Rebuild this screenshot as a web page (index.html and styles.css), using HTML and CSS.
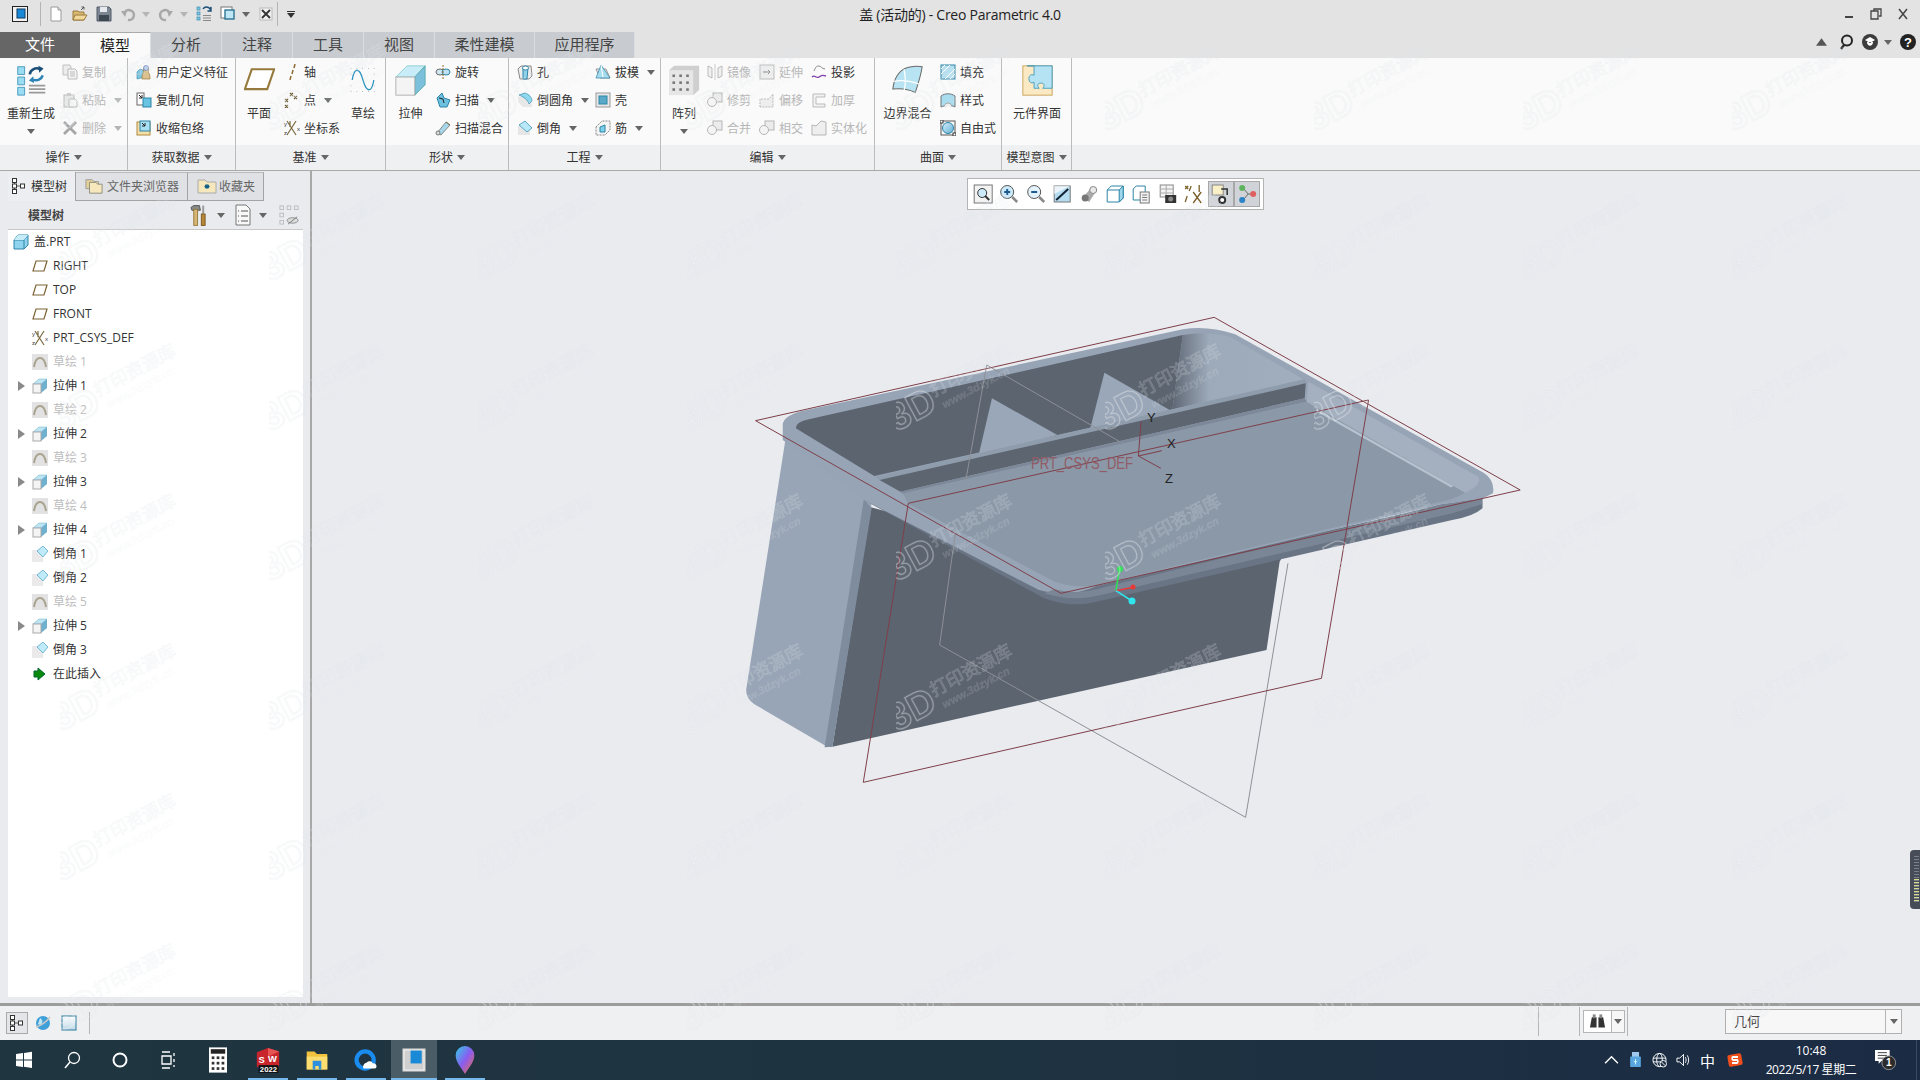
FILE: index.html
```html
<!DOCTYPE html>
<html lang="zh">
<head>
<meta charset="utf-8">
<title>盖 (活动的) - Creo Parametric 4.0</title>
<link rel="stylesheet" href="styles.css">
</head>
<body>
<svg class="defs" width="0" height="0">
<defs>
<linearGradient id="wallG" x1="0" x2="1" y1="0" y2="0"><stop offset="0" stop-color="#5f6774"/><stop offset=".28" stop-color="#9daaba"/><stop offset="1" stop-color="#a1aebe"/></linearGradient>
<linearGradient id="pinG" x1="0" x2="1" y1="0" y2="1"><stop offset="0" stop-color="#2fd0e8"/><stop offset=".5" stop-color="#8a5cf0"/><stop offset="1" stop-color="#f0703c"/></linearGradient>
<linearGradient id="blueG" x1="0" x2="1" y1="0" y2="1"><stop offset="0" stop-color="#d6f0fb"/><stop offset="1" stop-color="#62b0d4"/></linearGradient>
<linearGradient id="pageG" x1="0" x2="0" y1="0" y2="1"><stop offset="0" stop-color="#fff"/><stop offset="1" stop-color="#bfdbe8"/></linearGradient>
<symbol id="new" viewBox="0 0 16 16"><path d="M3 1h7l3 3v11H3z" fill="#fff" stroke="#9a9a9a"/><path d="M10 1v3h3" fill="#ddd" stroke="#9a9a9a"/></symbol>
<symbol id="open" viewBox="0 0 16 16"><path d="M1 14V5h5l1 1h5v8z" fill="#d9b873" stroke="#9a7a3a"/><path d="M1 14l2-5h12l-3 5z" fill="#f0d89c" stroke="#9a7a3a"/><path d="M9 4l3-3m0 0h-2.500m2.500 0v2.500" stroke="#555" fill="none"/></symbol>
<symbol id="save" viewBox="0 0 16 16"><path d="M1 1h12l2 2v12H1z" fill="#7c8692" stroke="#505a66"/><rect x="4" y="1" width="7" height="5" fill="#e6e9ee"/><rect x="3" y="9" width="10" height="6" fill="#3e4852"/></symbol>
<symbol id="undo" viewBox="0 0 16 16"><path d="M4 8a5 5 0 1 1 4 6" fill="none" stroke="#a8a8a8" stroke-width="2.500"/><path d="M1 5l6 0-2 6z" fill="#a8a8a8"/></symbol>
<symbol id="redo" viewBox="0 0 16 16"><path d="M12 8a5 5 0 1 0-4 6" fill="none" stroke="#a8a8a8" stroke-width="2.500"/><path d="M15 5H9l2 6z" fill="#a8a8a8"/></symbol>
<symbol id="regen" viewBox="0 0 16 16"><g fill="#7cc7e4" stroke="#3d8db0" stroke-width=".7"><rect x="1" y="1" width="3" height="3"/><rect x="1" y="6" width="3" height="3"/><rect x="1" y="11" width="3" height="3"/></g><path d="M7 12h8M7 14.500h8M7 9.500h8" stroke="#888"/><path d="M7 3a4 4 0 0 1 7 0l1-2v4h-3.500M14 7" fill="none" stroke="#1c4f78" stroke-width="1.400"/></symbol>
<symbol id="win" viewBox="0 0 16 16"><rect x="1" y="1" width="11" height="11" fill="#fff" stroke="#777"/><rect x="5" y="4" width="9" height="9" fill="#bfe6f5" stroke="#1f6b8a" stroke-width="1.300"/></symbol>
<symbol id="x" viewBox="0 0 16 16"><rect x="2" y="2" width="12" height="12" fill="#f2f2f2" stroke="#bbb"/><path d="M4 4l8 8M12 4l-8 8" stroke="#333" stroke-width="1.800"/></symbol>
<symbol id="regenB" viewBox="0 0 36 36"><g fill="#9adcf2" stroke="#3e93b8"><path d="M2 2h8v9H2z"/><path d="M2 14h8v9H2z"/><path d="M2 26h8v9H2z"/></g><path d="M15 24h19M15 28h19M15 32h19" stroke="#999" stroke-width="2"/><path d="M16 11a8 8 0 0 1 12-6" fill="none" stroke="#1c4f78" stroke-width="3"/><path d="M31 12a8 8 0 0 1-11 5" fill="none" stroke="#2d83b5" stroke-width="3"/><path d="M26 1l6 3-5 5z" fill="#1c4f78"/><path d="M21 21l-6-3 5-5z" fill="#2d83b5"/></symbol>
<symbol id="copy" viewBox="0 0 16 16"><path d="M1 1h7l1 2v8H1z" fill="#ececec" stroke="#c0c0c0"/><path d="M6 5h7l2 2v8H6z" fill="#f4f4f4" stroke="#bbb"/><path d="M8 8h5M8 10h5M8 12h5" stroke="#bbb"/></symbol>
<symbol id="paste" viewBox="0 0 16 16"><rect x="2" y="3" width="10" height="12" fill="#e8e8e8" stroke="#bbb"/><rect x="5" y="1" width="4" height="3" fill="#ccc"/><path d="M7 7h6l2 2v6H7z" fill="#f6f6f6" stroke="#bbb"/></symbol>
<symbol id="del" viewBox="0 0 16 16"><path d="M2 2l12 12M14 2L2 14" stroke="#a5a5a5" stroke-width="2.800"/></symbol>
<symbol id="udf" viewBox="0 0 16 16"><path d="M1 8l3-3 5 2v6l-8 2z" fill="#7fc6e2" stroke="#3f8fb0" stroke-width=".7"/><path d="M6 15c0-5 1-6 2-7-1-1-1-5 2-5s3 4 2 5c1 1 2 2 2 7z" fill="#dcc18e" stroke="#9a7a3a" stroke-width=".7"/><circle cx="10" cy="4" r="2.500" fill="#bcd0f0" stroke="#6a7fb0" stroke-width=".7"/></symbol>
<symbol id="cgeom" viewBox="0 0 16 16"><rect x="1" y="1" width="7" height="12" fill="#fff" stroke="#666"/><rect x="7" y="6" width="8" height="9" fill="#69c4e4" stroke="#2c84a6"/><path d="M3 3l3 3m0-3v3H3" fill="none" stroke="#222"/></symbol>
<symbol id="shrink" viewBox="0 0 16 16"><rect x="1" y="2" width="13" height="13" fill="#f4dfa8" stroke="#b08a3e"/><rect x="4" y="1" width="10" height="10" fill="#a9dff2" stroke="#2c84a6"/><path d="M6 3l3 3m0-3v3H6" fill="none" stroke="#222"/></symbol>
<symbol id="axis" viewBox="0 0 16 16"><path d="M11 0l-1 4M9 6L8 10M7 12l-1 4" stroke="#8c6c30" stroke-width="1.500"/></symbol>
<symbol id="point" viewBox="0 0 16 16"><path d="M1 7l3 3m0-3l-3 3M1 13l3 3m0-3l-3 3M6 1l3 3m0-3L6 4M10 4l3 3m0-3l-3 3" stroke="#6b5a30" stroke-width="1.100"/></symbol>
<symbol id="csys" viewBox="0 0 16 16"><path d="M6 1v6M12 1L3 15M3 1l9 14" stroke="#7a6a40" stroke-width="1.200" fill="none"/><text x="0" y="6" font-size="6" fill="#333" font-family="Liberation Sans">y</text><text x="0" y="15" font-size="6" fill="#333" font-family="Liberation Sans">z</text><text x="13" y="11" font-size="6" fill="#333" font-family="Liberation Sans">x</text></symbol>
<symbol id="revolve" viewBox="0 0 16 16"><ellipse cx="5" cy="8" rx="4" ry="3" fill="#d0e8f2" stroke="#6a6a6a"/><ellipse cx="11" cy="8" rx="4" ry="3" fill="#bfe0ee" stroke="#2c84a6"/><path d="M8 1v14" stroke="#8c6c30" stroke-dasharray="2 1"/></symbol>
<symbol id="sweep" viewBox="0 0 16 16"><path d="M2 6l5-5 2 5 6 2-3 7H5z" fill="#6cc1e0" stroke="#2c84a6"/><path d="M4 6l4 1 1 4" stroke="#222" fill="none"/></symbol>
<symbol id="sblend" viewBox="0 0 16 16"><path d="M2 13L11 2l4 3-9 10z" fill="#a5d6ea" stroke="#888"/><circle cx="3" cy="13" r="2" fill="#ddd" stroke="#777"/><path d="M11 2c1 1 3 2 4 3" stroke="#7a6a40"/></symbol>
<symbol id="hole" viewBox="0 0 16 16"><path d="M1 5l3-3h10l1 10-3 3H3z" fill="#eee" stroke="#888"/><path d="M6 4h5l-1 11H6z" fill="#8fd2ea" stroke="#2c84a6"/><ellipse cx="8.500" cy="4" rx="3" ry="2" fill="#fff" stroke="#2c84a6"/></symbol>
<symbol id="round" viewBox="0 0 16 16"><path d="M1 5h7l7 7v3H6L1 10z" fill="#e8e8e8"/><path d="M2 3l6-2c4 1 7 5 7 8l-3 3C11 8 7 5 2 3z" fill="#8fd8f0" stroke="#2c84a6" stroke-width=".7"/></symbol>
<symbol id="chamfer" viewBox="0 0 16 16"><path d="M1 6h7l5 5v4H1z" fill="#e6e6e6"/><path d="M2 5l6-4 7 7-5 4z" fill="#b8e8f8" stroke="#3f96b8" stroke-width=".8"/></symbol>
<symbol id="draft" viewBox="0 0 16 16"><path d="M1 5l4 9h10l-4-9z" fill="#e8e8e8" stroke="#999"/><path d="M1 14l5-13 9 13z" fill="#a8dcef" stroke="#2c84a6" stroke-width=".7"/><path d="M6 1l2 12" stroke="#fff"/></symbol>
<symbol id="shell" viewBox="0 0 16 16"><rect x="1" y="1" width="14" height="14" fill="#e8e8e8" stroke="#999"/><rect x="4" y="4" width="8" height="8" fill="#5aa9c9" stroke="#2c84a6"/></symbol>
<symbol id="rib" viewBox="0 0 16 16"><path d="M1 7l6-6h8v9l-5 5H1z" fill="#f4f4f4" stroke="#888" stroke-dasharray="2 1"/><path d="M5 7l5-2v7H5z" fill="#7fd0ea" stroke="#2c84a6"/></symbol>
<symbol id="mirror" viewBox="0 0 16 16"><path d="M1 2l4 2v10l-4-2zM15 2l-4 2v10l4-2z" fill="#f0f0f0" stroke="#bbb"/><path d="M8 0v16" stroke="#ccc"/></symbol>
<symbol id="extend" viewBox="0 0 16 16"><rect x="1" y="1" width="14" height="14" fill="#eee" stroke="#bbb"/><path d="M4 8h7m-2-2l2 2-2 2" stroke="#888" fill="none"/></symbol>
<symbol id="project" viewBox="0 0 16 16"><path d="M3 7c2-5 3-5 5-5s3 3 6 3" stroke="#888" fill="none"/><path d="M1 13c3-3 4 2 7 0s4-2 7-1" stroke="#8040b0" fill="none" stroke-width="1.400"/></symbol>
<symbol id="trim" viewBox="0 0 16 16"><rect x="6" y="1" width="9" height="9" fill="#ececec" stroke="#b5b5b5"/><circle cx="5" cy="10" r="4.500" fill="#f4f4f4" stroke="#b5b5b5"/></symbol>
<symbol id="offset" viewBox="0 0 16 16"><path d="M1 15V7h9l4-5v13z" fill="#eee" stroke="#bbb" stroke-dasharray="2 1"/></symbol>
<symbol id="thick" viewBox="0 0 16 16"><path d="M2 2h12v3H5v7h9v3H2z" fill="#f2f2f2" stroke="#bbb"/></symbol>
<symbol id="solid" viewBox="0 0 16 16"><path d="M1 5l4 1 5-5 5 1v13H1z" fill="#eee" stroke="#b5b5b5"/></symbol>
<symbol id="fill" viewBox="0 0 16 16"><rect x="1" y="1" width="14" height="14" fill="#b8e0f0" stroke="#2c84a6"/><path d="M1 10l9-9M5 15L15 5M1 5l4-4M10 15l5-5" stroke="#fff"/></symbol>
<symbol id="style" viewBox="0 0 16 16"><path d="M1 4c4-3 10-3 14 0v11c-3-2-10-2-14 0z" fill="#a8dcef" stroke="#777"/><path d="M4 14c2-4 6-4 8 0" fill="#f0f0f0" stroke="#999"/></symbol>
<symbol id="free" viewBox="0 0 16 16"><rect x="1" y="1" width="14" height="14" fill="none" stroke="#555"/><circle cx="8" cy="8" r="5.500" fill="url(#blueG)" stroke="#2c84a6"/><rect x="0" y="0" width="3" height="3" fill="#fff" stroke="#333"/><rect x="13" y="13" width="3" height="3" fill="#fff" stroke="#333"/></symbol>
<symbol id="planeB" viewBox="0 0 36 36"><path d="M9 5h26l-8 23H1z" fill="#fff" stroke="#96793c" stroke-width="2.400"/></symbol>
<symbol id="sketchB" viewBox="0 0 36 36"><path d="M3 18c3-18 10-18 15 0s12 18 15 0" fill="none" stroke="#2a93bf" stroke-width="1.800"/><path d="M1 2h1m7 0h1m7 0h1m7 0h1m7 0h1M1 10h1m31 0h1M1 26h1m31 0h1M1 34h1m7 0h1m7 0h1m7 0h1m7 0h1" stroke="#888" fill="none"/></symbol>
<symbol id="extB" viewBox="0 0 36 36"><path d="M1 14L14 1h21L23 14z" fill="#c8ecf8" stroke="#8cc"/><path d="M23 14L35 1v22L23 35z" fill="#7cc0dc" stroke="#5aa"/><rect x="1" y="14" width="22" height="21" fill="#f4f4f4" stroke="#aaa"/></symbol>
<symbol id="patB" viewBox="0 0 36 36"><path d="M0 6h28v29H0z" fill="#e6e6e6"/><path d="M0 6L6 1h29v28l-7 6V6z" fill="#cfcfcf"/><g fill="#777"><rect x="4" y="11" width="3" height="3"/><rect x="12" y="11" width="3" height="3"/><rect x="20" y="11" width="3" height="3"/><rect x="4" y="19" width="3" height="3"/><rect x="12" y="19" width="3" height="3"/><rect x="20" y="19" width="3" height="3"/><rect x="4" y="27" width="3" height="3"/><rect x="12" y="27" width="3" height="3"/><rect x="20" y="27" width="3" height="3"/></g></symbol>
<symbol id="boundB" viewBox="0 0 36 36"><path d="M1 28C2 16 8 6 18 3c6-2 14-2 17-1-1 8-4 18-8 30-8-4-18-5-26-4z" fill="#b8e3f2" stroke="#6a6a6a" stroke-width="1.200"/><path d="M14 5c2 10 2 18 0 25M2 19c10-2 20 0 29 3" stroke="#fff" stroke-width="1.500" fill="none"/></symbol>
<symbol id="compB" viewBox="0 0 36 36"><rect x="1" y="1" width="34" height="34" fill="#fbe9c4" stroke="#c29a4e"/><path d="M6 1h29v26H24c3-3 2-6-2-6s-5 3-2 6h-6v-7c-3 2-6 0-6-4s3-6 6-4V1z" fill="#b6e3f4" stroke="#3a97bd"/></symbol>
<symbol id="cube" viewBox="0 0 16 16"><path d="M1 6l4-5h10v10l-4 4H1z" fill="#8fd4ee" stroke="#2c84a6"/><path d="M1 6h10v9M11 6l4-5" stroke="#2c84a6" fill="none"/><path d="M1 6l4-5h10l-4 5z" fill="#c7ecf8"/></symbol>
<symbol id="plane" viewBox="0 0 16 16"><path d="M4 3h11l-3 10H1z" fill="#fff" stroke="#7d6234" stroke-width="1.200"/></symbol>
<symbol id="sk" viewBox="0 0 16 16"><rect width="16" height="16" fill="#e2e2e2"/><path d="M2 13C3 6 6 4 8 4s5 2 6 9" fill="none" stroke="#a8a490" stroke-width="2"/></symbol>
<symbol id="ext" viewBox="0 0 16 16"><path d="M1 6l6-5h8L9 6z" fill="#bde4f2" stroke="#7fbcd4" stroke-width=".6"/><path d="M9 6l6-5v9l-6 5z" fill="#6fb0cf"/><rect x="1" y="6" width="8" height="9" fill="#f4f4f4" stroke="#aaa"/></symbol>
<symbol id="cham" viewBox="0 0 16 16"><path d="M0 4h6l5 6v6H0z" fill="#eaeaea"/><path d="M5 5l6-5 5 5-5 6z" fill="#bfeafa" stroke="#4aa0c2" stroke-width=".7"/></symbol>
<symbol id="ins" viewBox="0 0 16 16"><path d="M6 2l7 6-7 6v-3H2V5h4z" fill="#0a8a0a" stroke="#063"/></symbol>
<symbol id="treeI" viewBox="0 0 16 16"><path d="M3.500 4v8M3.500 8H9" stroke="#555"/><g fill="#fff" stroke="#333"><rect x="1.500" y=".5" width="4" height="4"/><rect x="1.500" y="6" width="4" height="4"/><rect x="1.500" y="11.500" width="4" height="4"/><rect x="9.500" y="6" width="4" height="4"/></g></symbol>
<symbol id="folder" viewBox="0 0 20 20"><path d="M1 3h7l2 2h5v8H1z" fill="#e3cf98" stroke="#9a9a9a"/><path d="M5 6h7l2 2h5v10H5z" fill="#f6e7bd" stroke="#8a8a7a"/></symbol>
<symbol id="fav" viewBox="0 0 20 16"><path d="M1 2h7l2 2h9v11H1z" fill="#f6e7bd" stroke="#aaa"/><path d="M10 6v5M7.500 8.500h5M8 7l4 3M12 7l-4 3" stroke="#125f86" stroke-width="1.100"/></symbol>
<symbol id="hammer" viewBox="0 0 18 22"><path d="M1 3l3-2h6l1 5H2z" fill="#888" stroke="#555"/><rect x="4" y="5" width="4" height="17" fill="#d8b676" stroke="#96793c"/><rect x="13" y="1" width="2" height="9" fill="#999"/><rect x="12" y="10" width="4" height="12" fill="#b98538" stroke="#7a5a20"/></symbol>
<symbol id="listI" viewBox="0 0 16 22"><path d="M1 1h10l4 4v16H1z" fill="#f8f8f8" stroke="#777"/><path d="M3 7h1m2 0h7M3 12h1m2 0h7M3 17h1m2 0h7" stroke="#555"/></symbol>
<symbol id="treeOff" viewBox="0 0 22 22"><g fill="none" stroke="#bbb"><rect x="1" y="1" width="4" height="4"/><rect x="1" y="9" width="4" height="4"/><rect x="1" y="17" width="4" height="4"/><rect x="9" y="1" width="4" height="4"/><rect x="17" y="1" width="4" height="4"/></g><ellipse cx="15" cy="17" rx="6" ry="3" fill="#ddd" stroke="#888"/><path d="M10 21l10-8" stroke="#777"/></symbol>
<symbol id="vRefit" viewBox="0 0 20 20"><rect x="1" y="1" width="18" height="18" fill="#f2f2f2" stroke="#777"/><circle cx="9" cy="9" r="4.500" fill="#cdeafa" stroke="#333"/><path d="M12 12l4 4" stroke="#333" stroke-width="2"/></symbol>
<symbol id="vIn" viewBox="0 0 20 20"><circle cx="8" cy="8" r="6.500" fill="#cdeafa" stroke="#555"/><path d="M5 8h6M8 5v6" stroke="#1c5a90" stroke-width="2"/><path d="M13 13l5 5" stroke="#888" stroke-width="2.500"/></symbol>
<symbol id="vOut" viewBox="0 0 20 20"><circle cx="8" cy="8" r="6.500" fill="#e4f3fb" stroke="#555"/><path d="M5 8h6" stroke="#1c5a90" stroke-width="2"/><path d="M13 13l5 5" stroke="#888" stroke-width="2.500"/></symbol>
<symbol id="vRep" viewBox="0 0 20 20"><rect x="2" y="2" width="16" height="16" fill="#b4def0" stroke="#777"/><path d="M4 16L16 5" stroke="#123" stroke-width="2"/><path d="M2 2h16l-16 8z" fill="#fff" opacity=".7"/></symbol>
<symbol id="vDisp" viewBox="0 0 20 20"><path d="M3 14l9-10 5 3-7 11z" fill="#aaa"/><circle cx="14" cy="6" r="3.500" fill="#e8e8e8" stroke="#888"/><circle cx="6" cy="14" r="3.500" fill="#777"/></symbol>
<symbol id="vBox" viewBox="0 0 20 20"><path d="M2 6l4-4h12v12l-4 4H2z" fill="#ffffff" stroke="#2c84a6"/><path d="M14 6v12l4-4V2z" fill="#9ed7ec" stroke="#2c84a6"/><path d="M2 6h12" stroke="#2c84a6"/></symbol>
<symbol id="vSaved" viewBox="0 0 20 20"><path d="M2 5l3-3h9v14H2z" fill="#fff" stroke="#2c84a6"/><rect x="9" y="8" width="9" height="11" fill="#f4f4f4" stroke="#777"/><path d="M11 11h5M11 13.500h5M11 16h5" stroke="#777"/></symbol>
<symbol id="vCam" viewBox="0 0 20 20"><rect x="2" y="1" width="13" height="12" fill="#f4f4f4" stroke="#888"/><path d="M2 5h13M2 9h13M8 1v12" stroke="#aaa"/><rect x="7" y="11" width="11" height="8" fill="#333"/><circle cx="12.500" cy="15" r="2.500" fill="#888"/></symbol>
<symbol id="vDatum" viewBox="0 0 20 20"><path d="M1 2l3 3m0-3L1 5M7 2L5 7M3 12l-2 6M15 1v7M17 8L9 19M9 8l8 11" stroke="#7a5f28" stroke-width="1.300" fill="none"/></symbol>
<symbol id="vAnn" viewBox="0 0 20 20"><rect x="1" y="1" width="11" height="10" fill="#faf0c8" stroke="#888"/><circle cx="11" cy="16" r="3" fill="#fff" stroke="#333" stroke-width="2"/><path d="M10 5h6v6" fill="none" stroke="#333" stroke-width="1.500"/></symbol>
<symbol id="vNode" viewBox="0 0 20 20"><path d="M5 3l6 7-6 7M11 10h5" stroke="#666" fill="none"/><circle cx="5" cy="4" r="3" fill="#5fb35f"/><circle cx="16" cy="10" r="3" fill="#e06060"/><circle cx="5" cy="16" r="3" fill="#2c84c6"/></symbol>
<symbol id="globe" viewBox="0 0 16 16"><ellipse cx="8" cy="8" rx="7" ry="7" fill="#3f9fd8"/><path d="M1 12C6 11 12 6 15 2" stroke="#c8c8c8" stroke-width="1.600" fill="none"/><path d="M5 3c2 1 3 3 2 5s-3 2-4 1" fill="#bfe6f5"/></symbol>
<symbol id="page" viewBox="0 0 16 16"><rect x="1" y="1" width="14" height="14" fill="url(#pageG)" stroke="#2c7b9e"/></symbol>
<pattern id="wmP" x="60" y="40" width="209" height="150" patternUnits="userSpaceOnUse">
<g transform="translate(0 92) rotate(-28)" font-family="Liberation Sans, Noto Sans CJK SC, sans-serif">
<g font-weight="700" font-size="38" fill="none" stroke-linejoin="round"><text stroke="#bcc2ca" stroke-opacity=".13" stroke-width="2.400">3D</text><text stroke="#fff" stroke-opacity=".32" stroke-width="1">3D</text></g>
<text x="50" y="-13" font-size="18" fill="#fff" fill-opacity=".08" stroke="#fff" stroke-opacity=".16" stroke-width=".5" font-family="Noto Sans CJK SC, sans-serif">打印资源库</text>
<text x="50" y="-13" font-size="18" fill="none" stroke="#b8bec6" stroke-opacity=".1" stroke-width="1" font-family="Noto Sans CJK SC, sans-serif">打印资源库</text>
<text x="54" y="2" font-size="11" font-style="italic" font-weight="700" fill="#fff" fill-opacity=".12" stroke="#b8bec6" stroke-opacity=".1" stroke-width=".4">www.3dzyk.cn</text>
</g>
</pattern>
</defs>
</svg>

<header class="titlebar">
  <div class="qat">
    <svg class="appicon" viewBox="0 0 16 16"><rect x=".5" y=".5" width="15" height="15" fill="#f2f2f2" stroke="#222"/><rect x="5" y="3" width="8" height="9" fill="#1b8ad6" stroke="#0b3b66"/></svg>
    <i class="vsep"></i>
    <svg class="i q1"><use href="#new"/></svg>
    <svg class="i q2"><use href="#open"/></svg>
    <svg class="i q2"><use href="#save"/></svg>
    <svg class="i q2"><use href="#undo"/></svg><i class="dd lite"></i>
    <svg class="i q3"><use href="#redo"/></svg><i class="dd lite"></i>
    <svg class="i q3"><use href="#regen"/></svg>
    <svg class="i q3"><use href="#win"/></svg><i class="dd"></i>
    <svg class="i q4"><use href="#x"/></svg>
    <i class="vsep v2"></i>
    <i class="ddline"></i>
  </div>
  <div class="title">盖 (活动的) - Creo Parametric 4.0</div>
  <div class="winctl">
    <svg class="wc" viewBox="0 0 12 12"><path d="M2 9h8" stroke="#444" stroke-width="2"/></svg>
    <svg class="wc" viewBox="0 0 12 12"><path d="M4 3V1h7v7H9M1 3h7v8H1z" fill="none" stroke="#444" stroke-width="1.300"/></svg>
    <svg class="wc" viewBox="0 0 12 12"><path d="M2 1l8 10M10 1L2 11" stroke="#444" stroke-width="1.500"/></svg>
  </div>
</header>

<nav class="tabbar">
  <div class="tabs">
    <div class="tab file">文件</div>
    <div class="tab on">模型</div>
    <div class="tab">分析</div>
    <div class="tab">注释</div>
    <div class="tab">工具</div>
    <div class="tab">视图</div>
    <div class="tab wide">柔性建模</div>
    <div class="tab wide">应用程序</div>
  </div>
  <div class="helpers">
    <svg class="hi-s" viewBox="0 0 12 8"><path d="M6 0l6 8H0z" fill="#555"/></svg>
    <svg class="hi" viewBox="0 0 16 16"><circle cx="9" cy="6.500" r="5" fill="none" stroke="#222" stroke-width="2"/><path d="M6 11l-3 4" stroke="#222" stroke-width="2.400"/></svg>
    <svg class="hi" viewBox="0 0 16 16"><circle cx="8" cy="8" r="8" fill="#3c3c3c"/><path d="M3 6l5-3 5 3-5 3zM5 8c0 5 6 5 6 0" fill="#fff"/></svg>
    <i class="dd"></i>
    <svg class="hi" viewBox="0 0 16 16"><circle cx="8" cy="8" r="8" fill="#222"/><text x="8" y="13" font-size="13" font-weight="700" text-anchor="middle" fill="#fff" font-family="Liberation Sans">?</text></svg>
  </div>
</nav>

<section class="ribbon">
  <div class="grp g1">
    <div class="body">
      <div class="big b62"><div class="bi"><svg class="ib"><use href="#regenB"/></svg></div><span>重新生成</span><i class="dd"></i></div>
      <div class="col">
        <div class="it dis"><svg class="i"><use href="#copy"/></svg>复制</div>
        <div class="it dis"><svg class="i"><use href="#paste"/></svg>粘贴<i class="dd lite"></i></div>
        <div class="it dis"><svg class="i"><use href="#del"/></svg>删除<i class="dd lite"></i></div>
      </div>
    </div>
    <div class="lab">操作<i class="dd"></i></div>
  </div>
  <div class="grp g2">
    <div class="body pad8">
      <div class="col">
        <div class="it"><svg class="i"><use href="#udf"/></svg>用户定义特征</div>
        <div class="it"><svg class="i"><use href="#cgeom"/></svg>复制几何</div>
        <div class="it"><svg class="i"><use href="#shrink"/></svg>收缩包络</div>
      </div>
    </div>
    <div class="lab">获取数据<i class="dd"></i></div>
  </div>
  <div class="grp g3">
    <div class="body">
      <div class="big b46"><div class="bi"><svg class="ib"><use href="#planeB"/></svg></div><span>平面</span></div>
      <div class="col w58">
        <div class="it"><svg class="i"><use href="#axis"/></svg>轴</div>
        <div class="it"><svg class="i"><use href="#point"/></svg>点<i class="dd"></i></div>
        <div class="it"><svg class="i"><use href="#csys"/></svg>坐标系</div>
      </div>
      <div class="big b46"><div class="bi"><svg class="ib sm"><use href="#sketchB"/></svg></div><span>草绘</span></div>
    </div>
    <div class="lab">基准<i class="dd"></i></div>
  </div>
  <div class="grp g4">
    <div class="body">
      <div class="big b49"><div class="bi"><svg class="ib"><use href="#extB"/></svg></div><span>拉伸</span></div>
      <div class="col">
        <div class="it"><svg class="i"><use href="#revolve"/></svg>旋转</div>
        <div class="it"><svg class="i"><use href="#sweep"/></svg>扫描<i class="dd"></i></div>
        <div class="it"><svg class="i"><use href="#sblend"/></svg>扫描混合</div>
      </div>
    </div>
    <div class="lab">形状<i class="dd"></i></div>
  </div>
  <div class="grp g5">
    <div class="body pad8">
      <div class="col w78">
        <div class="it"><svg class="i"><use href="#hole"/></svg>孔</div>
        <div class="it"><svg class="i"><use href="#round"/></svg>倒圆角<i class="dd"></i></div>
        <div class="it"><svg class="i"><use href="#chamfer"/></svg>倒角<i class="dd"></i></div>
      </div>
      <div class="col">
        <div class="it"><svg class="i"><use href="#draft"/></svg>拔模<i class="dd"></i></div>
        <div class="it"><svg class="i"><use href="#shell"/></svg>壳</div>
        <div class="it"><svg class="i"><use href="#rib"/></svg>筋<i class="dd"></i></div>
      </div>
    </div>
    <div class="lab">工程<i class="dd"></i></div>
  </div>
  <div class="grp g6">
    <div class="body">
      <div class="big b46"><div class="bi"><svg class="ib"><use href="#patB"/></svg></div><span>阵列</span><i class="dd"></i></div>
      <div class="col w52">
        <div class="it dis"><svg class="i"><use href="#mirror"/></svg>镜像</div>
        <div class="it dis"><svg class="i"><use href="#trim"/></svg>修剪</div>
        <div class="it dis"><svg class="i"><use href="#trim"/></svg>合并</div>
      </div>
      <div class="col w52">
        <div class="it dis"><svg class="i"><use href="#extend"/></svg>延伸</div>
        <div class="it dis"><svg class="i"><use href="#offset"/></svg>偏移</div>
        <div class="it dis"><svg class="i"><use href="#trim"/></svg>相交</div>
      </div>
      <div class="col">
        <div class="it"><svg class="i"><use href="#project"/></svg>投影</div>
        <div class="it dis"><svg class="i"><use href="#thick"/></svg>加厚</div>
        <div class="it dis"><svg class="i"><use href="#solid"/></svg>实体化</div>
      </div>
    </div>
    <div class="lab">编辑<i class="dd"></i></div>
  </div>
  <div class="grp g7">
    <div class="body">
      <div class="big b65"><div class="bi"><svg class="ib"><use href="#boundB"/></svg></div><span>边界混合</span></div>
      <div class="col">
        <div class="it"><svg class="i"><use href="#fill"/></svg>填充</div>
        <div class="it"><svg class="i"><use href="#style"/></svg>样式</div>
        <div class="it"><svg class="i"><use href="#free"/></svg>自由式</div>
      </div>
    </div>
    <div class="lab">曲面<i class="dd"></i></div>
  </div>
  <div class="grp g8">
    <div class="body">
      <div class="big b70"><div class="bi"><svg class="ib"><use href="#compB"/></svg></div><span>元件界面</span></div>
    </div>
    <div class="lab">模型意图<i class="dd"></i></div>
  </div>
  <div class="grp rest"><div class="body"></div><div class="lab"></div></div>
</section>

<main class="main">
  <aside class="side">
    <div class="stabs">
      <div class="stab act"><svg class="i"><use href="#treeI"/></svg>模型树</div>
      <div class="stab t2"><svg class="i f"><use href="#folder"/></svg>文件夹浏览器</div>
      <div class="stab t3"><svg class="i f"><use href="#fav"/></svg>收藏夹</div>
    </div>
    <div class="stool">
      <b>模型树</b>
      <div class="tools">
        <svg class="tl h"><use href="#hammer"/></svg><i class="dd"></i>
        <svg class="tl n"><use href="#listI"/></svg><i class="dd"></i>
        <svg class="tl o"><use href="#treeOff"/></svg>
      </div>
    </div>
    <div class="tree">
      <div class="row root"><svg class="i"><use href="#cube"/></svg>盖.PRT</div>
      <div class="row"><svg class="i"><use href="#plane"/></svg>RIGHT</div>
      <div class="row"><svg class="i"><use href="#plane"/></svg>TOP</div>
      <div class="row"><svg class="i"><use href="#plane"/></svg>FRONT</div>
      <div class="row"><svg class="i"><use href="#csys"/></svg>PRT_CSYS_DEF</div>
      <div class="row off"><svg class="i"><use href="#sk"/></svg>草绘 1</div>
      <div class="row"><i class="tw"></i><svg class="i"><use href="#ext"/></svg>拉伸 1</div>
      <div class="row off"><svg class="i"><use href="#sk"/></svg>草绘 2</div>
      <div class="row"><i class="tw"></i><svg class="i"><use href="#ext"/></svg>拉伸 2</div>
      <div class="row off"><svg class="i"><use href="#sk"/></svg>草绘 3</div>
      <div class="row"><i class="tw"></i><svg class="i"><use href="#ext"/></svg>拉伸 3</div>
      <div class="row off"><svg class="i"><use href="#sk"/></svg>草绘 4</div>
      <div class="row"><i class="tw"></i><svg class="i"><use href="#ext"/></svg>拉伸 4</div>
      <div class="row"><svg class="i"><use href="#cham"/></svg>倒角 1</div>
      <div class="row"><svg class="i"><use href="#cham"/></svg>倒角 2</div>
      <div class="row off"><svg class="i"><use href="#sk"/></svg>草绘 5</div>
      <div class="row"><i class="tw"></i><svg class="i"><use href="#ext"/></svg>拉伸 5</div>
      <div class="row"><svg class="i"><use href="#cham"/></svg>倒角 3</div>
      <div class="row"><svg class="i"><use href="#ins"/></svg>在此插入</div>
    </div>
  </aside>
  <div class="canvas">
    <div class="vbar">
      <svg class="v"><use href="#vRefit"/></svg>
      <svg class="v"><use href="#vIn"/></svg>
      <svg class="v"><use href="#vOut"/></svg>
      <svg class="v"><use href="#vRep"/></svg>
      <svg class="v"><use href="#vDisp"/></svg>
      <svg class="v"><use href="#vBox"/></svg>
      <svg class="v"><use href="#vSaved"/></svg>
      <svg class="v"><use href="#vCam"/></svg>
      <svg class="v"><use href="#vDatum"/></svg>
      <svg class="v on"><use href="#vAnn"/></svg>
      <svg class="v on"><use href="#vNode"/></svg>
    </div>
    <svg class="model" viewBox="312 171 1608 832">
      <g transform="translate(720 300) scale(.523 .33333)">
        <path d="M285 620L215 1340 1045 1050 1070 785 1100 700 700 800z" fill="#5c6470"/>
        <path d="M125 420L50 1170Q50 1195 65 1212L205 1340 215 1340 290 610 275 590 130 400z" fill="#98a5b6"/>
        <path d="M200 1342L215 1340 290 625 275 598z" fill="#7f8c9d"/>
        <path d="M275 600L620 895Q670 925 720 905L1400 660Q1440 650 1458 625L1458 590 700 850 400 640z" fill="#697484"/>
        <path d="M120 375Q120 345 165 330L885 88Q930 75 985 103L1460 518Q1482 540 1478 580L1455 598 1380 612 720 858Q670 895 610 870L275 600 120 420z" fill="#97a4b5"/>
        <path d="M640 868Q680 885 720 868L1380 612 1455 598 1458 612 1400 640 720 888Q670 905 620 880z" fill="#7a8696"/>
        <path d="M145 385Q145 365 170 358L885 105 865 328 295 528z" fill="#5c6470"/>
        <path d="M885 105Q930 92 975 110L1115 238 865 328z" fill="url(#wallG)"/>
        <path d="M520 295L645 405 495 462z" fill="#9aa7b8"/>
        <path d="M735 218L860 330 708 385z" fill="#9aa7b8"/>
        <path d="M297 530L1118 238 1122 250 305 540z" fill="#8f9cac"/>
        <path d="M305 540L1120 250 1118 295 345 575z" fill="#5d6571"/>
        <path d="M345 575L1118 295 1122 305 350 582z" fill="#7d8999"/>
        <path d="M350 580L1122 305 1425 578Q1400 600 1370 608L720 855Q680 866 640 845L360 612z" fill="#8a98a8"/>
        <path d="M1125 245L1450 530Q1458 555 1425 578L1122 305z" fill="#a4b0c0"/>
        <path d="M1140 330L1400 560" stroke="#b7c2cf" stroke-width="6" fill="none"/>
        <g fill="none">
          <path class="pg" d="M510 195L470 540M510 195L770 430M450 700L420 1035 1005 1552 1086 790"/>
          <path class="pr" d="M68 362L945 52 1530 570 652 880z"/>
          <path class="pr" d="M360 610L1240 300 1150 1135 274 1447z"/>
          <path class="pr" d="M805 365L800 468 845 452M800 468L843 505"/>
          <path class="tg" d="M757 872L764 806"/>
          <path class="trd" d="M757 872L790 862"/>
          <path class="tc" d="M757 872L788 903"/>
        </g>
      </g>
      <circle cx="1120" cy="569" r="3" fill="#31e35a"/>
      <circle cx="1133" cy="587" r="2.500" fill="#e63a3a"/>
      <circle cx="1132" cy="601" r="3.500" fill="#2fe6ee"/>
      <text class="lbl c" x="1031" y="469" textLength="102" lengthAdjust="spacingAndGlyphs">PRT_CSYS_DEF</text>
      <text class="lbl" x="1147" y="422">Y</text>
      <text class="lbl" x="1167" y="448">X</text>
      <text class="lbl" x="1165" y="483">Z</text>
    </svg>
    <div class="grip"><i></i></div>
  </div>
</main>

<footer class="status">
  <div class="sleft">
    <span class="sbtn"><svg class="i"><use href="#treeI"/></svg></span>
    <svg class="i s"><use href="#globe"/></svg>
    <svg class="i s"><use href="#page"/></svg>
    <i class="ssep"></i>
  </div>
  <div class="sright">
    <i class="ssep"></i><i class="ssep gap"></i>
    <span class="find"><svg class="bino" viewBox="0 0 18 16"><path d="M1 15l2-11h5v11zM10 15V4h5l2 11z" fill="#333"/><rect x="4" y="1" width="3" height="4" fill="#888"/><rect x="11" y="1" width="3" height="4" fill="#888"/></svg><span class="fdd"><i class="dd"></i></span></span>
    <i class="ssep"></i>
    <span class="combo"><span class="ctext">几何</span><span class="fdd"><i class="dd"></i></span></span>
  </div>
</footer>

<footer class="taskbar">
  <div class="tk-left">
    <span class="tk"><svg class="t-i" viewBox="0 0 18 18"><path d="M1 3l7-1v6.500H1zM9 2l8-1.300V8.500H9zM1 9.500h7V16l-7-1zM9 9.500h8v7.500l-8-1.200z" fill="#fff"/></svg></span>
    <span class="tk"><svg class="t-i" viewBox="0 0 18 18"><circle cx="11" cy="7" r="5.500" fill="none" stroke="#fff" stroke-width="1.300"/><path d="M7 11l-5 6" stroke="#fff" stroke-width="1.500"/></svg></span>
    <span class="tk"><svg class="t-i" viewBox="0 0 18 18"><circle cx="9" cy="9" r="6.500" fill="none" stroke="#fff" stroke-width="2"/></svg></span>
    <span class="tk"><svg class="t-i" viewBox="0 0 18 18"><path d="M3 1h8M3 17h8M3 5h9v8H3zM15 2v3M15 8v3M15 14v2" fill="none" stroke="#fff" stroke-width="1.300"/></svg></span>
    <span class="tk calc"><svg class="t-b" viewBox="0 0 20 28"><rect width="20" height="28" fill="#fff"/><rect x="2" y="2" width="16" height="5" fill="#222"/><g fill="#333"><rect x="3" y="10" width="3" height="3"/><rect x="8.500" y="10" width="3" height="3"/><rect x="14" y="10" width="3" height="3"/><rect x="3" y="16" width="3" height="3"/><rect x="8.500" y="16" width="3" height="3"/><rect x="14" y="16" width="3" height="3"/><rect x="3" y="22" width="3" height="3"/><rect x="8.500" y="22" width="3" height="3"/><rect x="14" y="22" width="3" height="3"/></g></svg></span>
    <span class="tk app"><svg class="t-b" viewBox="0 0 28 30"><path d="M1 6l13-5 13 4v17l-13 6-13-5z" fill="#c8242c"/><path d="M14 1l13 4-13 6z" fill="#e65454"/><text x="3" y="18" font-size="11" font-weight="700" fill="#fff" font-family="Liberation Sans">S</text><text x="14" y="17" font-size="11" font-weight="700" fill="#fff" font-family="Liberation Sans">W</text><rect x="3" y="21" width="23" height="9" fill="#111"/><text x="14.500" y="29" text-anchor="middle" font-size="9" font-weight="700" fill="#fff" font-family="Liberation Sans">2022</text></svg></span>
    <span class="tk app"><svg class="t-b" viewBox="0 0 28 28"><path d="M2 4h9l3 3h12v18H2z" fill="#f2c23e"/><rect x="2" y="10" width="24" height="15" fill="#fbdd70"/><path d="M9 15h10v10h-3v-4h-4v4H9z" fill="#2e90dc"/></svg></span>
    <span class="tk app"><svg class="t-b" viewBox="0 0 28 28"><circle cx="13" cy="14" r="10" fill="none" stroke="#1a8cf0" stroke-width="5"/><path d="M11 24a5 5 0 0 1 4-7 4 4 0 0 1 7 1 3 3 0 0 1 2 6z" fill="#fff"/></svg></span>
    <span class="tk app cur"><svg class="t-b" viewBox="0 0 28 28"><rect x="1" y="1" width="26" height="26" fill="#f0f0f0" stroke="#bbb"/><rect x="3" y="3" width="22" height="22" fill="#cfcfcf"/><rect x="10" y="3" width="13" height="15" fill="#1b8ad6"/></svg></span>
    <span class="tk app"><svg class="t-b" viewBox="0 0 22 30"><path d="M11 30C6 22 1 17 1 10a10 10 0 0 1 20 0c0 7-5 12-10 20z" fill="url(#pinG)"/></svg></span>
  </div>
  <div class="tray">
    <svg class="tr" viewBox="0 0 14 14"><path d="M1 10l6-6 6 6" fill="none" stroke="#fff" stroke-width="1.300"/></svg>
    <svg class="tr" viewBox="0 0 14 18"><rect x="3" y="0" width="8" height="6" fill="#9ec9ec"/><rect x="1" y="5" width="12" height="12" rx="1" fill="#5aa7e0"/><path d="M7 8v6M5 10l2 2 2-2" stroke="#dff" fill="none"/></svg>
    <svg class="tr" viewBox="0 0 16 16"><circle cx="8" cy="8" r="7" fill="none" stroke="#fff"/><ellipse cx="8" cy="8" rx="3" ry="7" fill="none" stroke="#fff"/><path d="M1 6h14M1 10h14" stroke="#fff"/><circle cx="12" cy="12" r="3.500" fill="#1c2e42" stroke="#fff"/><path d="M10 10l4 4" stroke="#fff"/></svg>
    <svg class="tr" viewBox="0 0 16 16"><path d="M1 6h3l4-4v12l-4-4H1z" fill="none" stroke="#fff"/><path d="M10 5c1 2 1 4 0 6M12 3c2 3 2 7 0 10" fill="none" stroke="#fff"/></svg>
    <span class="ime">中</span>
    <svg class="tr sg" viewBox="0 0 16 16"><rect x="1" y="2" width="14" height="12" rx="2" transform="rotate(-10 8 8)" fill="#f04e1a"/><path d="M11 5H6c-1 0-1 3 0 3h4c1 0 1 3 0 3H5" fill="none" stroke="#fff" stroke-width="1.800"/></svg>
    <div class="clock"><span>10:48</span><span class="date">2022/5/17 星期二</span></div>
    <span class="notif"><svg class="nsvg" viewBox="0 0 26 24"><path d="M1 1h16v12H8l-3 3v-3H1z" fill="#fff"/><path d="M4 4h10M4 7h10M4 10h10" stroke="#333"/><circle cx="16" cy="15" r="7.500" fill="#2b2b2b" stroke="#9a9a9a"/><text x="16" y="19" text-anchor="middle" font-size="11" font-weight="700" fill="#fff" font-family="Liberation Sans">1</text></svg></span>
    <i class="showd"></i>
  </div>
</footer>

<svg class="wm" width="1920" height="1040"><rect width="1920" height="1040" fill="url(#wmP)"/></svg>
</body>
</html>
```
FILE: styles.css
```css
* { box-sizing: border-box; }
html, body { margin: 0; padding: 0; }
body {
  width: 1920px; height: 1080px; overflow: hidden; position: relative;
  display: flex; flex-direction: column;
  font-family: "Open Sans", "Noto Sans CJK SC", sans-serif;
  font-size: 12px; color: #333; background: #e9ebef;
}
i { font-style: normal; display: block; }
svg { display: block; flex: none; }
.defs { position: absolute; }
.dd { width: 0; height: 0; border: 4px solid transparent; border-top: 5px solid #666; border-bottom: 0; flex: none; }
.dd.lite { border-top-color: #b5b5b5; }

.titlebar { height: 32px; padding-bottom: 4px; background: #e3e3e3; display: grid; grid-template-columns: 1fr auto 1fr; align-items: center; }
.qat { display: flex; align-items: center; padding-left: 12px; }
.appicon { width: 16px; height: 16px; }
.vsep { width: 1px; height: 24px; background: #b4b4b4; margin-left: 12px; }
.v2 { margin-left: 3px; }
.i { width: 16px; height: 16px; }
.q1 { margin-left: 7px; }
.q2 { margin-left: 8px; }
.q3 { margin-left: 8px; }
.q4 { margin-left: 8px; }
.qat .dd { margin-left: 6px; }
.ddline { width: 8px; height: 7px; margin-left: 9px; border-top: 1px solid #333; position: relative; }
.ddline::after { content: ""; position: absolute; left: 0; top: 1px; border: 4px solid transparent; border-top: 5px solid #333; border-bottom: 0; }
.title { font-size: 14px; color: #222; letter-spacing: -.25px; }
.winctl { display: flex; justify-content: flex-end; gap: 15px; padding-right: 11px; }
.wc { width: 12px; height: 12px; }

.tabbar { height: 26px; background: #e3e3e3; display: flex; justify-content: space-between; }
.tabs { display: flex; }
.tab { width: 71px; height: 26px; background: #c8ccd0; border-right: 1px solid #dcdde0; font-size: 15px; line-height: 25px; text-align: center; color: #444; }
.tab.file { width: 80px; background: #666; color: #fff; border: 0; }
.tab.on { background: #fafafa; color: #222; border-top: 1px solid #aaa; }
.tab.wide { width: 100px; }
.helpers { display: flex; align-items: center; gap: 7px; padding: 0 4px 6px 0; }
.hi-s { width: 11px; height: 8px; margin-right: 4px; }
.hi { width: 16px; height: 16px; }
.hi:nth-child(2) { margin-right: 1px; }
.helpers .dd { margin: 0 1px 0 -1px; }

.ribbon { height: 113px; display: flex; border-bottom: 1px solid #a9a9a9; background: #eff0f2; }
.grp { display: flex; flex-direction: column; border-right: 1px solid #bcbcbc; flex: none; }
.g1 { width: 128px; } .g2 { width: 108px; } .g3 { width: 150px; } .g4 { width: 123px; }
.g5 { width: 152px; } .g6 { width: 214px; } .g7 { width: 127px; } .g8 { width: 70px; }
.rest { flex: 1; border: 0; }
.body { height: 87px; background: #fafafa; display: flex; flex: none; }
.pad8 { padding-left: 8px; }
.lab { flex: 1; display: flex; align-items: center; justify-content: center; gap: 4px; color: #333; white-space: nowrap; padding-bottom: 1px; }
.col { display: flex; flex-direction: column; }
.w52 { width: 52px; } .w58 { width: 58px; padding-left: 2px; } .w78 { width: 78px; }
.it { height: 28px; display: flex; align-items: center; gap: 4px; white-space: nowrap; color: #333; }
.it .dd { margin-left: 4px; }
.it.dis { color: #b7b7b7; }
.big { display: flex; flex-direction: column; align-items: center; flex: none; white-space: nowrap; color: #333; }
.b62 { width: 62px; } .b46 { width: 46px; } .b49 { width: 49px; } .b65 { width: 65px; } .b70 { width: 70px; }
.bi { height: 44px; display: flex; align-items: flex-start; padding-top: 7px; }
.big > span { line-height: 24px; height: 24px; }
.big .dd { margin-top: 3px; }
.ib { width: 31px; height: 31px; }
.ib.sm { width: 26px; height: 26px; margin-top: 2px; }

.main { height: 832px; display: flex; flex: none; }
.side { width: 312px; flex: none; border-right: 2px solid #a8a8a8; padding-left: 8px; background: #e9ebef; display: flex; flex-direction: column; }
.stabs { display: flex; height: 30px; margin-left: -8px; padding: 1px 0 0 8px; }
.stab { display: flex; align-items: center; gap: 4px; height: 29px; padding-bottom: 2px; border: 1px solid #a4a4a4; border-left: 0; border-top: 1px solid #bbb; background: #dfe1e4; color: #666; }
.stab.act { width: 68px; background: #eceef1; border: 0; border-right: 1px solid #a4a4a4; color: #333; gap: 4px; padding-left: 3px; }
.t2 { width: 112px; padding-left: 8px; gap: 3px; }
.t3 { width: 76px; padding-left: 9px; gap: 2px; }
.i.f { width: 20px; height: 18px; }
.stool { height: 29px; display: flex; align-items: center; justify-content: space-between; border-bottom: 1px solid #c8c8c8; padding: 0 4px 0 20px; width: 295px; }
.stool b { font-weight: 700; color: #444; }
.tools { display: flex; align-items: center; gap: 8px; }
.tl { width: 17px; height: 22px; }
.tl.h { margin-right: 2px; }
.tl.n { width: 16px; margin-left: 2px; }
.tl.o { width: 20px; height: 20px; margin-left: 4px; }
.tree { background: #fff; width: 295px; flex: 1; margin-bottom: 6px; }
.row { height: 24px; display: flex; align-items: center; gap: 5px; padding: 0 0 2px 24px; position: relative; color: #333; white-space: nowrap; }
.row .i { position: relative; top: 1px; }
.row.root { padding-left: 5px; gap: 5px; }
.row.off { color: #bdbdbd; }
.tw { position: absolute; left: 10px; top: 7px; width: 0; height: 0; border: 5px solid transparent; border-left: 7px solid #8a8a8a; border-right: 0; }

.canvas { flex: 1; position: relative; background: #e9ebef; }
.model { position: absolute; left: 0; top: 0; width: 1608px; height: 832px; }
.pr { stroke: #7e3f49; stroke-width: 1; vector-effect: non-scaling-stroke; }
.pg { stroke: #8d9096; stroke-width: 1; vector-effect: non-scaling-stroke; }
.tg { stroke: #31e35a; stroke-width: 1.500; vector-effect: non-scaling-stroke; }
.trd { stroke: #e63a3a; stroke-width: 1.500; vector-effect: non-scaling-stroke; }
.tc { stroke: #2fe6ee; stroke-width: 1.500; vector-effect: non-scaling-stroke; }
.lbl { font: 13px "Liberation Sans", sans-serif; fill: #222; }
.lbl.c { fill: #925c66; font-size: 16px; }
.vbar { position: absolute; z-index: 2; left: 655px; top: 7px; width: 297px; height: 32px; background: #fff; border: 1px solid #b3b3b3; display: flex; align-items: center; padding-left: 2px; }
.v { width: 26.400px; height: 26px; padding: 3px; flex: none; }
.v.on { background: #d0d3d7; box-shadow: inset 0 0 0 1px #a8a8a8; }
.grip { position: absolute; right: 0; top: 679px; width: 10px; height: 59px; background: #474d58; border-radius: 4px 0 0 4px; padding: 6px 0 0 4px; }
.grip i { width: 5px; height: 47px; background: repeating-linear-gradient(#7a808a 0 1px, transparent 1px 3px); position: relative; }
.grip i::after { content: ""; position: absolute; left: 0; right: 0; bottom: 0; height: 24px; background: repeating-linear-gradient(#d8dc8a 0 1px, transparent 1px 3px); }

.status { height: 37px; flex: none; background: #eff0f2; border-top: 3px solid #9c9c9c; display: flex; justify-content: space-between; align-items: center; }
.sleft { display: flex; align-items: center; padding-left: 6px; }
.sbtn { width: 22px; height: 22px; border: 1px solid #aaa; background: #e4e5e8; display: flex; align-items: center; justify-content: center; }
.i.s { margin-left: 7px; }
.sleft .i.s + .i.s { margin-left: 10px; }
.ssep { width: 1px; height: 29px; background: #b5b5b5; }
.sleft .ssep { margin-left: 12px; height: 22px; }
.sright { display: flex; align-items: center; padding: 0 18px 4px 0; }
.ssep.gap { margin-left: 40px; margin-right: 3px; }
.find { display: flex; width: 42px; height: 23px; margin-right: 2px; background: #fff; border: 1px solid #b5b5b5; align-items: center; }
.bino { width: 17px; height: 16px; margin: 0 5px; }
.fdd { width: 14px; align-self: stretch; border-left: 1px solid #b5b5b5; display: flex; align-items: center; justify-content: center; background: #f7f7f7; }
.combo { width: 177px; height: 25px; margin-left: 97px; border: 1px solid #b0b0b0; display: flex; background: #f7f7f7; align-items: center; }
.ctext { flex: 1; padding: 0 0 2px 8px; font-size: 13px; color: #444; }
.combo .fdd { width: 16px; }

.taskbar { height: 40px; flex: none; background: linear-gradient(90deg, #1f3540, #1e3340 50%, #1b2b44); display: flex; justify-content: space-between; align-items: center; }
.tk-left { display: flex; height: 100%; align-items: center; }
.tk { width: 48px; height: 40px; display: flex; align-items: center; justify-content: center; }
.t-i { width: 18px; height: 18px; }
.t-b { width: 24px; height: 28px; }
.calc { width: 52px; }
.calc .t-b { width: 18px; }
.app { width: 40px; margin: 0 4.500px; border-bottom: 2px solid #76b9ed; padding-top: 2px; }
.app:nth-child(6) { margin-left: 4px; }
.cur { background: #4a5d66; width: 46px; margin: 0 3px 0 .500px; }
.tray { display: flex; align-items: center; height: 100%; color: #fff; }
.tray .tr { width: 15px; height: 16px; margin-right: 9px; stroke: none; }
.ime { font-size: 15px; margin-right: 12px; }
.tray .sg { width: 16px; margin-right: 15px; }
.clock { display: flex; flex-direction: column; align-items: center; font-size: 12px; line-height: 19px; width: 106px; }
.date { letter-spacing: -.4px; }
.notif { width: 26px; margin-left: 10px; }
.nsvg { width: 24px; height: 22px; }
.showd { width: 1px; height: 40px; background: #3b4a5e; margin: 0 3px 0 16px; }

.wm { position: absolute; left: 0; top: 0; pointer-events: none; z-index: 5; }
```
